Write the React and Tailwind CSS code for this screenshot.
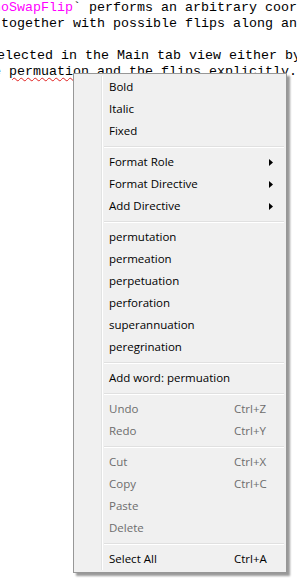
const lines = [
  { off: 'ml-[-7px]', segs: [{ t: 'noSwapFlip', c: 'text-[#ff00ff]' }, { t: '` performs an arbitrary coordinate' }] },
  { off: 'ml-[-7px]', segs: [{ t: ' together with possible flips along an axis' }] },
  { off: 'ml-[-7px]', segs: [{ t: '\u00a0' }] },
  { off: 'ml-[-3px]', segs: [{ t: 'elected in the Main tab view either by' }] },
  { off: 'ml-[-7px]', segs: [{ t: 'e ' }, { t: 'permuation', c: 'underline decoration-wavy decoration-[#e02020] decoration-1 underline-offset-2' }, { t: ' and the flips explicitly.' }] },
];

const menu = [
  { label: 'Bold' },
  { label: 'Italic' },
  { label: 'Fixed' },
  'sep',
  { label: 'Format Role', sub: true },
  { label: 'Format Directive', sub: true },
  { label: 'Add Directive', sub: true },
  'sep',
  { label: 'permutation' },
  { label: 'permeation' },
  { label: 'perpetuation' },
  { label: 'perforation' },
  { label: 'superannuation' },
  { label: 'peregrination' },
  'sep',
  { label: 'Add word: permuation' },
  'sep',
  { label: 'Undo', key: 'Ctrl+Z', off: true },
  { label: 'Redo', key: 'Ctrl+Y', off: true },
  'sep',
  { label: 'Cut', key: 'Ctrl+X', off: true },
  { label: 'Copy', key: 'Ctrl+C', off: true },
  { label: 'Paste', off: true },
  { label: 'Delete', off: true },
  'sep',
  { label: 'Select All', key: 'Ctrl+A' },
];

function MenuItem({ item }) {
  if (item === 'sep') {
    return (
      <div className="h-[9px] flex flex-col justify-center pl-[1px]">
        <div className="h-px bg-[#e0e0e0]" />
        <div className="h-px bg-white" />
      </div>
    );
  }
  return (
    <div className={`h-[22px] flex items-center pl-[6px] ${item.off ? 'text-[#6d6d6d]' : 'text-black'}`}>
      <span className="w-[125px] whitespace-nowrap">{item.label}</span>
      {item.key && <span className="whitespace-nowrap">{item.key}</span>}
      {item.sub && (
        <svg className="ml-auto mr-[11px]" width="4" height="7" viewBox="0 0 4 7">
          <path d="M0 0L4 3.5L0 7Z" fill="#000" />
        </svg>
      )}
    </div>
  );
}

export default function App() {
  return (
    <div className="relative w-[297px] h-[582px] overflow-hidden bg-white">
      <div className="text-[13.33px] leading-[16px] text-black whitespace-pre" style={{ fontFamily: '"Liberation Mono", "Courier New", monospace' }}>
        {lines.map((line, i) => (
          <div key={i} className={line.off}>
            {line.segs.map((seg, j) => (
              <span key={j} className={seg.c}>{seg.t}</span>
            ))}
          </div>
        ))}
      </div>

      <div
        className="absolute left-[73px] top-[73px] w-[214px] h-[500px] border border-[#979797] bg-[#f0f0f0] p-[2px] flex shadow-[3px_3px_2px_rgba(0,0,0,0.4)] text-[11.5px]"
        style={{ fontFamily: '"Segoe UI", "Open Sans", "Liberation Sans", sans-serif' }}
      >
        <div className="w-[25px] shrink-0" />
        <div className="w-px bg-[#e2e3e3]" />
        <div className="w-px bg-white" />
        <div className="flex-1 flex flex-col">
          {menu.map((item, i) => (
            <MenuItem key={i} item={item} />
          ))}
        </div>
      </div>
    </div>
  );
}
